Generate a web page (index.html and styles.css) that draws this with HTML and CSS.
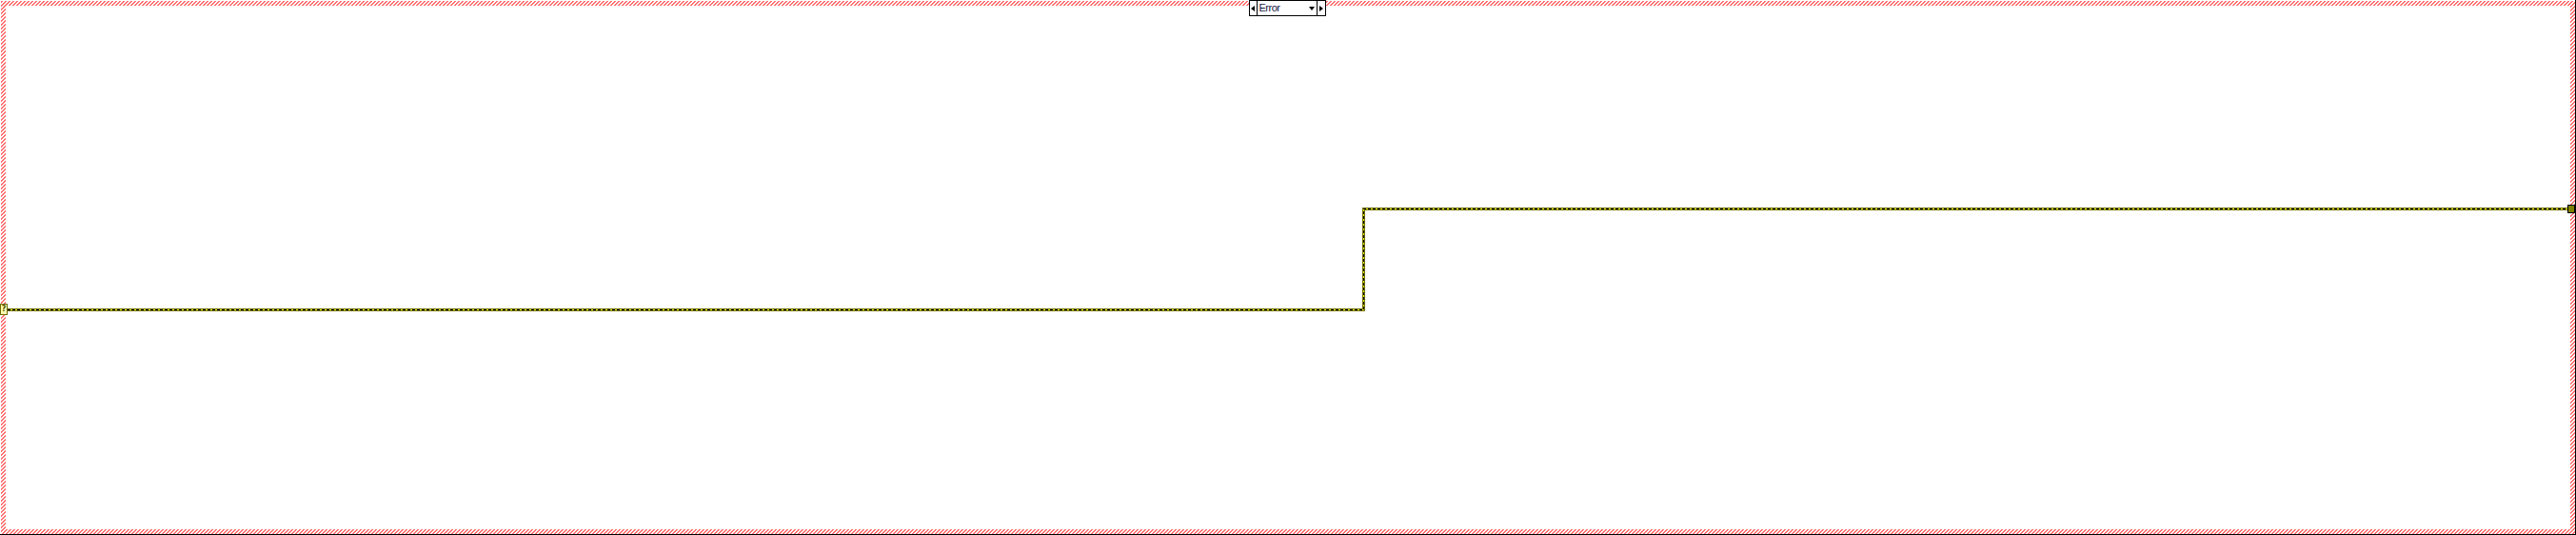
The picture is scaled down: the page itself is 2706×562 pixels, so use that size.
FILE: index.html
```html
<!DOCTYPE html>
<html>
<head>
<meta charset="utf-8">
<link rel="stylesheet" href="styles.css">
</head>
<body>
<div class="diagram">
  <div class="case">
    <div class="case-inner"></div>
  </div>
  <div class="selector-bar">
    <div class="selector">
      <div class="sel-arrow sel-left"><span class="tri-left"></span></div>
      <div class="sel-label">Error<span class="tri-down"></span></div>
      <div class="sel-arrow sel-right"><span class="tri-right"></span></div>
    </div>
  </div>
  <svg class="wires" width="2706" height="562" viewBox="0 0 2706 562">
    <path d="M8 325.5 H1432.5 V219.5 H2698" fill="none" stroke="#6f6f00" stroke-width="3" stroke-linejoin="miter"/>
    <path d="M8 325.5 H1432.5 V219.5 H2698" fill="none" stroke="#ffff00" stroke-width="1"/>
    <path d="M8 325.5 H1432.5 V219.5 H2698" fill="none" stroke="#000" stroke-width="1" stroke-dasharray="3 2"/>
  </svg>
  <div class="tunnel-in">?</div>
  <div class="tunnel-out"></div>
</div>
</body>
</html>
```

FILE: styles.css
```css
html, body {
  margin: 0;
  padding: 0;
  background: #fff;
}
.diagram {
  position: relative;
  width: 2706px;
  height: 562px;
  box-sizing: border-box;
  padding: 1px 0 0 1px;
  background: #fff;
  border-right: 1px solid #000;
  border-bottom: 1px solid #000;
  display: flex;
}
.case {
  flex: 1;
  box-sizing: border-box;
  padding: 5px;
  display: flex;
  background-color: #fff;
  background-image: linear-gradient(135deg, #ff6e6e 30%, #ffffff 30%, #ffffff 50%, #ff6e6e 50%, #ff6e6e 80%, #ffffff 80%, #ffffff);
  background-size: 4px 4px;
}
.case-inner {
  flex: 1;
  background: #fff;
}
.selector-bar {
  position: absolute;
  top: 0;
  left: 0;
  right: 0;
  display: flex;
  justify-content: center;
}
.selector {
  display: flex;
  height: 17px;
  box-sizing: border-box;
  border: 1px solid #000;
  background: #fff;
  margin-left: -1px;
}
.sel-arrow {
  width: 7px;
  display: flex;
  align-items: center;
  justify-content: center;
}
.sel-left { border-right: 1px solid #000; }
.sel-right { border-left: 1px solid #000; width: 8px; }
.tri-left {
  width: 0; height: 0;
  border-top: 3.5px solid transparent;
  border-bottom: 3.5px solid transparent;
  border-right: 4px solid #000;
}
.tri-right {
  width: 0; height: 0;
  border-top: 3.5px solid transparent;
  border-bottom: 3.5px solid transparent;
  border-left: 4px solid #000;
}
.sel-label {
  width: 62px;
  box-sizing: border-box;
  padding-left: 2px;
  padding-right: 2px;
  display: flex;
  align-items: center;
  justify-content: space-between;
  font-family: "Liberation Sans", Arial, sans-serif;
  font-size: 11px;
  letter-spacing: -0.5px;
  color: #141440;
  line-height: 15px;
}
.tri-down {
  width: 0; height: 0;
  border-left: 3px solid transparent;
  border-right: 3px solid transparent;
  border-top: 4px solid #000;
}
.wires {
  position: absolute;
  left: 0;
  top: 0;
}
.tunnel-in {
  position: absolute;
  left: 0;
  top: 319px;
  width: 8px;
  height: 12px;
  box-sizing: border-box;
  border: 1px solid #6b6b00;
  background: #ffffb0;
  font-family: "DejaVu Sans", sans-serif;
  font-weight: bold;
  font-size: 8px;
  line-height: 10px;
  text-align: center;
  color: #4d4d00;
  overflow: hidden;
}
.tunnel-out {
  position: absolute;
  left: 2697px;
  top: 215px;
  width: 8px;
  height: 9px;
  box-sizing: border-box;
  border: 1px solid #000;
  background: #808000;
}
```
